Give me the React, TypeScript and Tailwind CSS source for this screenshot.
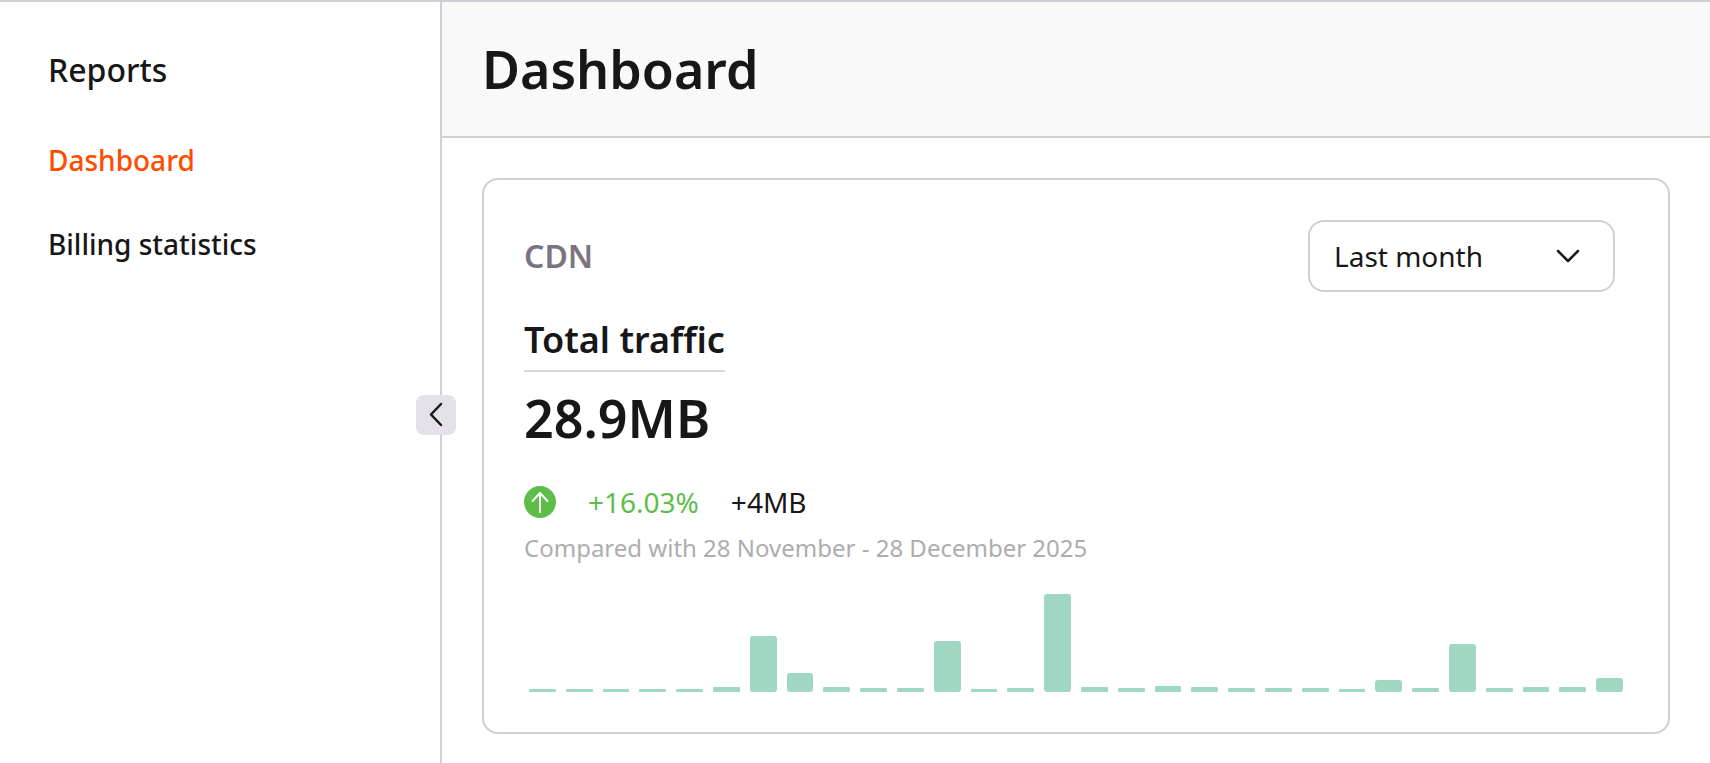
import { useState } from "react";

const menus = [
  { title: "Dashboard", href: "#dashboard" },
  { title: "Billing statistics", href: "#billing" },
];

const traffic = [
  3, 3, 3, 3, 3, 5, 56, 19, 5, 4, 4, 51, 3, 4, 98, 5, 4, 6, 5, 4, 4, 4, 3, 12,
  4, 48, 4, 5, 5, 14,
];

const Sidebar = () => {
  const [isOpen, setIsOpen] = useState(true);

  return (
    <aside
      className={`relative shrink-0 border-r-2 border-[#d0cfd6] ${
        isOpen ? "w-[442px]" : "w-12"
      }`}
    >
      {isOpen && (
        <nav className="pl-12 pt-12">
          <h2 className="text-[32px] leading-10 font-medium">Reports</h2>
          <ul className="mt-[52px] flex flex-col gap-12 text-[28px] leading-9 font-medium">
            {menus.map((menu, index) => (
              <li key={menu.title}>
                <a
                  href={menu.href}
                  className={index === 0 ? "text-[#ff4c00]" : ""}
                >
                  {menu.title}
                </a>
              </li>
            ))}
          </ul>
        </nav>
      )}
      <button
        type="button"
        aria-label="Toggle sidebar"
        onClick={() => setIsOpen(!isOpen)}
        className="absolute -right-4 top-[393px] flex size-10 items-center justify-center rounded-lg bg-[#e4e2e8]"
      >
        <svg
          viewBox="0 0 40 40"
          className={`size-10 ${isOpen ? "" : "rotate-180"}`}
          fill="none"
          stroke="#171717"
          strokeWidth="2.5"
          strokeLinecap="round"
          strokeLinejoin="round"
        >
          <path d="M25 9L15 19.500L25 30" />
        </svg>
      </button>
    </aside>
  );
};

const TrafficCard = () => {
  const [period, setPeriod] = useState("month");

  return (
    <section className="m-10 rounded-2xl border-2 border-[#d0cfd6] p-10">
      <div className="flex items-center justify-between">
        <h2 className="text-[32px] leading-10 font-semibold text-[#7b7480]">
          CDN
        </h2>
        <div className="relative mr-[13px] w-[307px]">
          <select
            aria-label="Period"
            value={period}
            onChange={(event) => setPeriod(event.target.value)}
            className="h-[72px] w-full appearance-none rounded-2xl border-2 border-[#d0cfd6] bg-white pl-6 pr-16 text-[28px]"
          >
            <option value="week">Last week</option>
            <option value="month">Last month</option>
          </select>
          <svg
            viewBox="0 0 24 24"
            className="pointer-events-none absolute right-[35px] top-6 size-6"
            fill="none"
            stroke="#171717"
            strokeWidth="2.5"
            strokeLinecap="round"
            strokeLinejoin="round"
          >
            <path d="M2 7L12 17L22 7" />
          </svg>
        </div>
      </div>
      <h3 className="mt-6 w-fit border-b-2 border-[#d9d9d9] pb-1.5 text-[36px] leading-[48px] font-semibold">
        Total traffic
      </h3>
      <p className="mt-[14px] text-[52px] leading-[64px] font-semibold">
        28.9MB
      </p>
      <div className="mt-8 flex items-center gap-8 text-[28px] leading-10">
        <svg viewBox="0 0 32 32" className="size-8" fill="none">
          <circle cx="16" cy="16" r="16" fill="#5dbd49" />
          <path
            d="M16 26V7M8.500 15L16 7L23.500 15"
            stroke="white"
            strokeWidth="2"
            strokeLinecap="round"
            strokeLinejoin="round"
          />
        </svg>
        <span className="text-[#5dbd49]">+16.03%</span>
        <span>+4MB</span>
      </div>
      <p className="mt-[10px] text-2xl leading-8 text-[#adadad]">
        Compared with 28 November - 28 December 2025
      </p>
      <div className="mt-[30px] flex h-[98px] items-end">
        {traffic.map((value, index) => (
          <div key={index} className="flex-1 px-[5px]">
            <div
              className={`bg-[#9fd7c2] ${value > 10 ? "rounded-[3px]" : "rounded-[1px]"}`}
              style={{ height: value }}
            />
          </div>
        ))}
      </div>
    </section>
  );
};

const App = () => {
  return (
    <div className="flex min-h-screen border-t-2 border-[#d0cfd6] bg-white font-['Noto_Sans',sans-serif] text-[#171717]">
      <Sidebar />
      <main className="min-w-0 flex-1">
        <header className="border-b-2 border-[#d0cfd6] bg-[#f9f9f9] px-10 py-[35px]">
          <h1 className="text-[52px] leading-[64px] font-semibold">
            Dashboard
          </h1>
        </header>
        <TrafficCard />
      </main>
    </div>
  );
};

export default App;
